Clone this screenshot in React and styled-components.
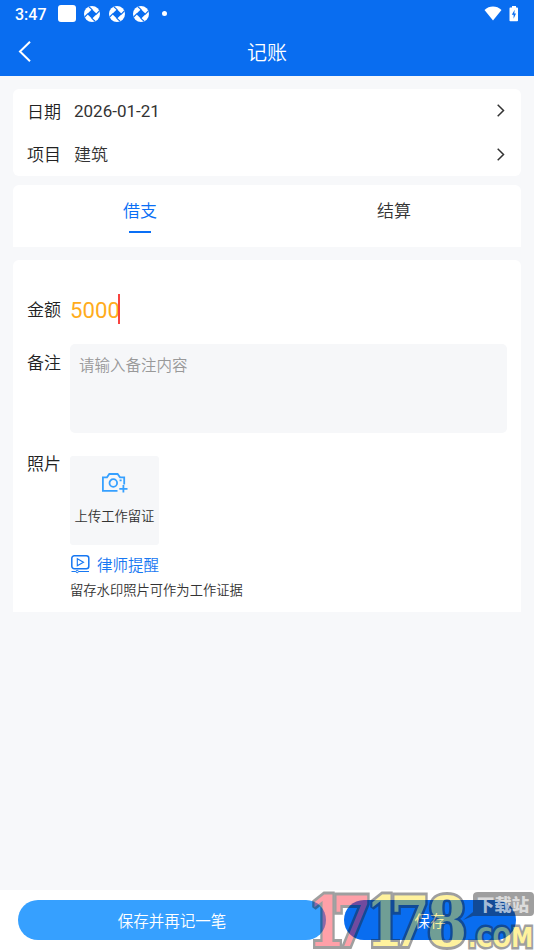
import React, { useState } from "react";
import styled, { createGlobalStyle } from "styled-components";

export default function App() {
    const [tab, setTab] = useState("borrow");

    return (
        <>
            <GlobalStyle />
            <Page>
                <Header>
                    <StatusBar>
                        <Time>3:47</Time>
                        <Square />
                        <Shutter />
                        <Shutter />
                        <Shutter />
                        <Dot />
                        <StatusRight>
                            <WifiIcon />
                            <BatteryIcon />
                        </StatusRight>
                    </StatusBar>
                    <NavBar>
                        <BackIcon />
                        <Title>记账</Title>
                    </NavBar>
                </Header>
                <Main>
                    <InfoCard>
                        <InfoRow>
                            <Label>日期</Label>
                            <Value>2026-01-21</Value>
                            <ChevronIcon />
                        </InfoRow>
                        <InfoRow>
                            <Label>项目</Label>
                            <Value $cjk>建筑</Value>
                            <ChevronIcon />
                        </InfoRow>
                    </InfoCard>
                    <TabCard>
                        <Tab $active={tab === "borrow"} onClick={() => setTab("borrow")}>
                            借支
                        </Tab>
                        <Tab $active={tab === "settle"} onClick={() => setTab("settle")}>
                            结算
                        </Tab>
                    </TabCard>
                    <FormCard>
                        <AmountRow>
                            <Label>金额</Label>
                            <Amount>5000</Amount>
                            <Caret />
                        </AmountRow>
                        <NoteRow>
                            <Label>备注</Label>
                            <Note placeholder="请输入备注内容" />
                        </NoteRow>
                        <PhotoRow>
                            <Label>照片</Label>
                            <PhotoColumn>
                                <Upload>
                                    <CameraIcon />
                                    <UploadText>上传工作留证</UploadText>
                                </Upload>
                                <Reminder>
                                    <VideoIcon />
                                    <ReminderText>律师提醒</ReminderText>
                                </Reminder>
                                <Hint>留存水印照片可作为工作证据</Hint>
                            </PhotoColumn>
                        </PhotoRow>
                    </FormCard>
                </Main>
                <Footer>
                    <SaveAgain>保存并再记一笔</SaveAgain>
                    <Save>保存</Save>
                    <Watermark />
                </Footer>
            </Page>
        </>
    );
}

function Shutter() {
    return (
        <ShutterSvg width="16" height="16" viewBox="0 0 16 16">
            <circle cx="8" cy="8" r="8" fill="#fff" />
            <path d="M8 3.200 12.800 8 8 12.800 3.200 8Z" fill="#096df0" />
            <path
                d="M8.300 3.900 4.800.6M12.100 8.300 15.400 4.800M7.700 12.100 11.200 15.400M3.900 7.700.6 11.200"
                stroke="#096df0"
                strokeWidth="1.200"
            />
        </ShutterSvg>
    );
}

function WifiIcon() {
    return (
        <svg width="18" height="15" viewBox="0 0 18 15">
            <path d="M.5 4Q4.300.6 9 .6T17.500 4L9 14.400Z" fill="#fff" />
        </svg>
    );
}

function BatteryIcon() {
    return (
        <svg width="10" height="16" viewBox="0 0 10 16">
            <path d="M3 0h4v1.600h1.200q.8 0 .8.8v12q0 .8-.8.8H1.300q-.8 0-.8-.8v-12q0-.8.8-.8H3Z" fill="#fff" />
            <path d="M5.700 3.800 2.800 8.800h1.800v4L7 7.600H5.300Z" fill="#096df0" />
        </svg>
    );
}

function BackIcon() {
    return (
        <svg width="14" height="22" viewBox="0 0 14 22">
            <path d="M12 .8 2 10.500l10 9.700" fill="none" stroke="#fff" strokeWidth="2" />
        </svg>
    );
}

function ChevronIcon() {
    return (
        <svg width="8" height="13" viewBox="0 0 8 13">
            <path d="M.7.8 6.500 6.500.7 12.200" fill="none" stroke="#333" strokeWidth="1.500" />
        </svg>
    );
}

function CameraIcon() {
    return (
        <svg width="27" height="20" viewBox="0 0 27 20" fill="none" stroke="#36a0ff" strokeWidth="1.800">
            <path d="M16.500 17.900H1.900V4.300H6L8.300 1h8.300L19 4.300h4.200v7.200" />
            <circle cx="12.300" cy="10" r="3.800" />
            <path d="M18.600 7.400h2M22.400 12v7.600M18.300 15.800h8.200" />
        </svg>
    );
}

function VideoIcon() {
    return (
        <svg width="20" height="20" viewBox="0 0 20 20" fill="none" stroke="#1677f2">
            <rect x="1.800" y="1.800" width="17" height="12.900" rx="2.500" strokeWidth="1.500" />
            <path d="M7.300 4.800v7l6.200-3.500Z" strokeWidth="1.100" />
            <path d="M1.500 17.500h4.300M8.600 17.500H19" strokeWidth="1" />
            <circle cx="7.200" cy="17.500" r="1.200" strokeWidth="1" />
        </svg>
    );
}

const digits = [
    { char: "1", x: -2, width: 37, color: "#ff1e32" },
    { char: "7", x: 22, width: 40, color: "#ff1e32" },
    { char: "1", x: 56, width: 37, color: "#ffe219" },
    { char: "7", x: 80, width: 40, color: "#ffe219" },
    { char: "8", x: 117, width: 40, color: "#ffe219" },
];

function Watermark() {
    return (
        <WatermarkSvg width="224" height="60" viewBox="0 0 224 60">
            <g opacity="0.42">
                {digits.map((d, i) => (
                    <Digit key={i} x={d.x} y="56" textLength={d.width} lengthAdjust="spacingAndGlyphs" fill={d.color}>
                        {d.char}
                    </Digit>
                ))}
                <path d="M168 2h52q4 0 4 4v16q0 4-4 4h-57l-10 4 10-8V6q0-4 5-4Z" fill="#1c1c1c" />
                <Domain x="158" y="57" textLength="65" lengthAdjust="spacingAndGlyphs">
                    .COM
                </Domain>
            </g>
            <Site x="167" y="21" textLength="52" lengthAdjust="spacingAndGlyphs">
                下载站
            </Site>
        </WatermarkSvg>
    );
}

const GlobalStyle = createGlobalStyle`
    * {
        box-sizing: border-box;
    }
    body {
        margin: 0;
        background: #f7f8fa;
        font-family: Roboto, "Noto Sans CJK SC", sans-serif;
        font-weight: 350;
        color: #333;
    }
    svg {
        display: block;
        flex-shrink: 0;
    }
`;
const Page = styled.div`
    height: 950px;
    display: flex;
    flex-direction: column;
    overflow: hidden;
`;
const Header = styled.header`
    height: 76px;
    background: #096df0;
    color: #fff;
`;
const StatusBar = styled.div`
    height: 27px;
    display: flex;
    align-items: center;
    padding: 0 15px;
`;
const Time = styled.span`
    width: 43px;
    font-size: 16px;
    font-weight: 500;
    line-height: 27px;
    padding-top: 1px;
`;
const Square = styled.span`
    width: 18px;
    height: 17px;
    border-radius: 3px;
    background: #fff;
    margin-right: 8px;
`;
const ShutterSvg = styled.svg`
    margin-right: 8.5px;
`;
const Dot = styled.span`
    width: 5px;
    height: 5px;
    border-radius: 50%;
    background: #fff;
    margin-left: 4px;
`;
const StatusRight = styled.div`
    display: flex;
    align-items: center;
    gap: 7px;
    margin-left: auto;
`;
const NavBar = styled.div`
    height: 49px;
    display: grid;
    grid-template-columns: 32px 1fr 32px;
    align-items: center;
    padding: 0 18px;
`;
const Title = styled.h1`
    margin: 0;
    padding-top: 3px;
    text-align: center;
    font-size: 20px;
    font-weight: inherit;
    line-height: 46px;
`;
const Main = styled.main`
    flex: 1;
    padding: 13px 13px 0;
`;
const InfoCard = styled.section`
    height: 87px;
    background: #fff;
    border-radius: 6px;
    padding: 0 16px 0 14px;
`;
const InfoRow = styled.div`
    height: 43.5px;
    display: flex;
    align-items: center;
`;
const Label = styled.span`
    width: 43px;
    flex-shrink: 0;
    padding-top: 2px;
    font-size: 17px;
    line-height: 24px;
    color: #222;
`;
const Value = styled.span`
    flex: 1;
    font-size: 17px;
    font-weight: ${(props) => (props.$cjk ? 350 : 400)};
    line-height: 24px;
    padding: ${(props) => (props.$cjk ? "2px 0 0 4px" : "0 0 0 4px")};
`;
const TabCard = styled.section`
    height: 62px;
    margin-top: 9px;
    background: #fff;
    border-radius: 6px 6px 0 0;
    display: flex;
`;
const Tab = styled.button`
    flex: 1;
    display: flex;
    flex-direction: column;
    align-items: center;
    border: 0;
    padding: 14px 0 0;
    background: none;
    font-family: inherit;
    font-size: 17px;
    font-weight: inherit;
    line-height: 24px;
    color: ${(props) => (props.$active ? "#0a6ff5" : "#333")};

    &::after {
        content: "";
        width: 22px;
        height: 2px;
        margin-top: 8px;
        background: ${(props) => (props.$active ? "#0a6ff5" : "transparent")};
    }
`;
const FormCard = styled.section`
    height: 352px;
    margin-top: 13px;
    background: #fff;
    border-radius: 6px 6px 0 0;
    padding: 34px 14px 0;
`;
const AmountRow = styled.div`
    height: 30px;
    display: flex;
    align-items: center;
`;
const Amount = styled.span`
    font-size: 22.2px;
    font-weight: 400;
    line-height: 30px;
    color: #ffac1c;
    padding-top: 2px;
`;
const Caret = styled.i`
    width: 2px;
    height: 30px;
    margin-left: -2px;
    background: #f8433f;
`;
const NoteRow = styled.div`
    display: flex;
    margin-top: 20px;

    ${Label} {
        padding-top: 7px;
    }
`;
const Note = styled.textarea`
    flex: 1;
    height: 89px;
    border: 0;
    border-radius: 5px;
    outline: none;
    resize: none;
    background: #f6f7f9;
    padding: 11px 9px 9px;
    font-family: inherit;
    font-size: 15.5px;
    font-weight: inherit;
    line-height: 23px;

    &::placeholder {
        color: #999;
    }
`;
const PhotoRow = styled.div`
    display: flex;
    margin-top: 23px;

    ${Label} {
        margin-top: -6px;
    }
`;
const PhotoColumn = styled.div`
    display: flex;
    flex-direction: column;
`;
const Upload = styled.div`
    width: 89px;
    height: 89px;
    display: flex;
    flex-direction: column;
    align-items: center;
    padding-top: 17px;
    background: #f6f7f9;
    border-radius: 3px;
`;
const UploadText = styled.span`
    margin-top: 14px;
    font-size: 13.3px;
    line-height: 20px;
    white-space: nowrap;
`;
const Reminder = styled.div`
    display: flex;
    align-items: center;
    gap: 7px;
    height: 22px;
    margin-top: 8px;
    color: #1677f2;
`;
const ReminderText = styled.span`
    padding-top: 3px;
    font-size: 15.5px;
    line-height: 22px;
`;
const Hint = styled.span`
    margin-top: 6px;
    font-size: 13.3px;
    line-height: 20px;
`;
const Footer = styled.footer`
    position: relative;
    height: 60px;
    display: flex;
    gap: 18px;
    padding: 10px 18px;
    background: #fff;
`;
const Button = styled.button`
    height: 40px;
    border: 0;
    border-radius: 20px;
    padding: 0;
    color: #fff;
    font-family: inherit;
    font-size: 15.5px;
    font-weight: inherit;
`;
const SaveAgain = styled(Button)`
    width: 308px;
    background: #36a0ff;
`;
const Save = styled(Button)`
    width: 172px;
    background: #096df0;
`;
/* site stamp lying over the footer buttons */
const WatermarkSvg = styled.svg`
    position: absolute;
    right: 0;
    bottom: 0;
    overflow: visible;
    pointer-events: none;
`;
const Digit = styled.text`
    font-family: "DejaVu Serif", serif;
    font-size: 70px;
    font-weight: 700;
    stroke: #1c1c1c;
    stroke-width: 6px;
    stroke-linejoin: miter;
    stroke-miterlimit: 2;
    paint-order: stroke;
`;
const Domain = styled.text`
    font-family: "DejaVu Sans", sans-serif;
    font-size: 27px;
    font-weight: 700;
    fill: #ffe219;
    stroke: #1c1c1c;
    stroke-width: 5px;
    paint-order: stroke;
`;
const Site = styled.text`
    font-family: "Noto Sans CJK SC", sans-serif;
    font-size: 17px;
    font-weight: 900;
    fill: rgba(255, 255, 255, 0.65);
`;
